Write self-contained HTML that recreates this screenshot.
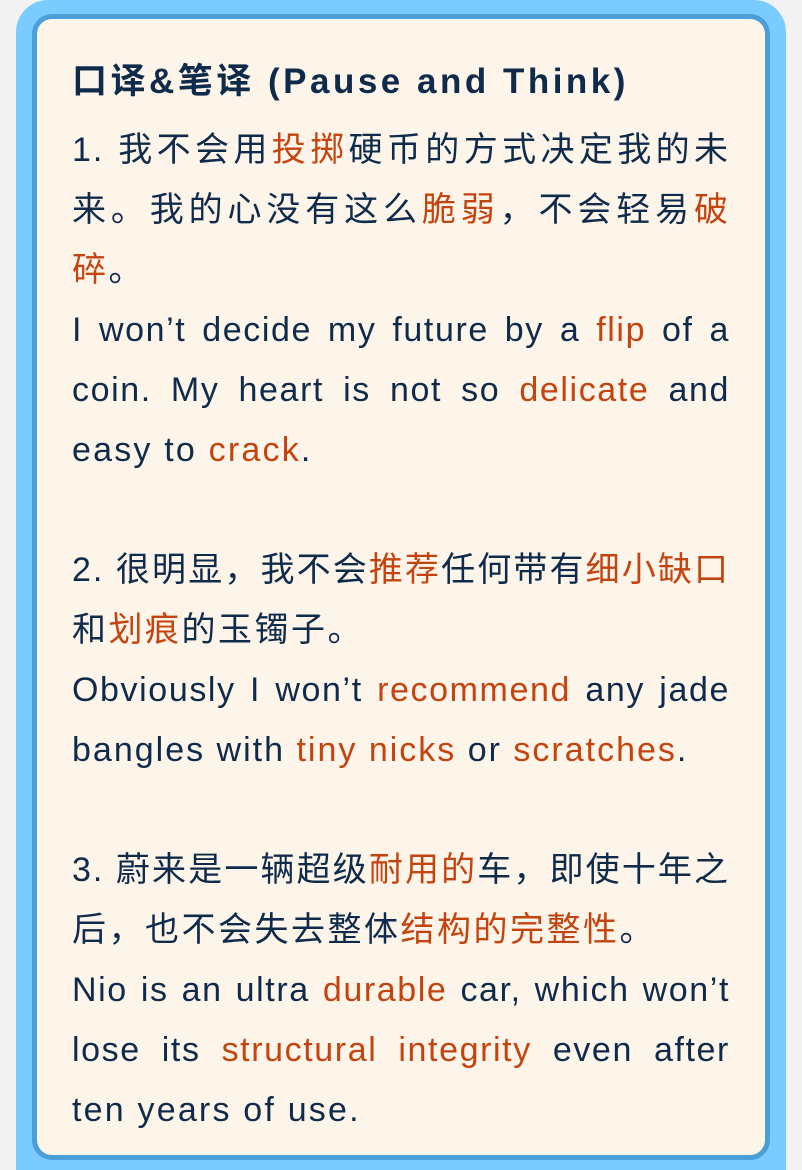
<!DOCTYPE html>
<html><head><meta charset="utf-8"><style>
html,body{margin:0;padding:0;background:#f2f2f2;width:802px;height:1170px;overflow:hidden;position:relative}
.outer{position:absolute;left:16px;top:0;width:770px;height:1170px;background:#7acbff;border-radius:32px 32px 0 0}
.inner{position:absolute;left:32px;top:14px;width:728px;height:1136px;background:#fdf5e9;border:5px solid #4a9fd8;border-radius:20px}
.c{position:absolute;left:72px;top:52px;width:658px;font-family:"Liberation Sans","Noto Sans CJK SC",sans-serif;color:#0f2b4c;font-size:34px;line-height:60px}
h1{font-size:35px;font-weight:bold;margin:0 0 8px 0;line-height:60px;text-align:left;letter-spacing:3.5px;white-space:nowrap}
.l{white-space:nowrap;height:60px;text-align:justify;text-align-last:justify}
.l.end{text-align:left;text-align-last:left}
.z{letter-spacing:2px}
.e{letter-spacing:1.6px}
.o{color:#c4440f}
.g{height:60px}
</style></head><body>
<div class="outer"></div><div class="inner"></div>
<div class="c">
<h1>口译&amp;笔译 (Pause and Think)</h1>
<div class="l z">1. 我不会用<span class="o">投掷</span>硬币的方式决定我的未</div>
<div class="l z">来。我的心没有这么<span class="o">脆弱</span>，不会轻易<span class="o">破</span></div>
<div class="l z end" style="letter-spacing:2.5px"><span class="o">碎</span>。</div>
<div class="l e">I won’t decide my future by a <span class="o">flip</span> of a</div>
<div class="l e">coin. My heart is not so <span class="o">delicate</span> and</div>
<div class="l e end" style="letter-spacing:2.2px">easy to <span class="o">crack</span>.</div>
<div class="g"></div>
<div class="l z">2. 很明显，我不会<span class="o">推荐</span>任何带有<span class="o">细小缺口</span></div>
<div class="l z end" style="letter-spacing:2.5px">和<span class="o">划痕</span>的玉镯子。</div>
<div class="l e">Obviously I won’t <span class="o">recommend</span> any jade</div>
<div class="l e end" style="letter-spacing:2px">bangles with <span class="o">tiny nicks</span> or <span class="o">scratches</span>.</div>
<div class="g"></div>
<div class="l z">3. 蔚来是一辆超级<span class="o">耐用的</span>车，即使十年之</div>
<div class="l z end" style="letter-spacing:2.5px">后，也不会失去整体<span class="o">结构的完整性</span>。</div>
<div class="l e">Nio is an ultra <span class="o">durable</span> car, which won’t</div>
<div class="l e">lose its <span class="o">structural integrity</span> even after</div>
<div class="l e end" style="letter-spacing:2.2px">ten years of use.</div>
</div>
</body></html>
